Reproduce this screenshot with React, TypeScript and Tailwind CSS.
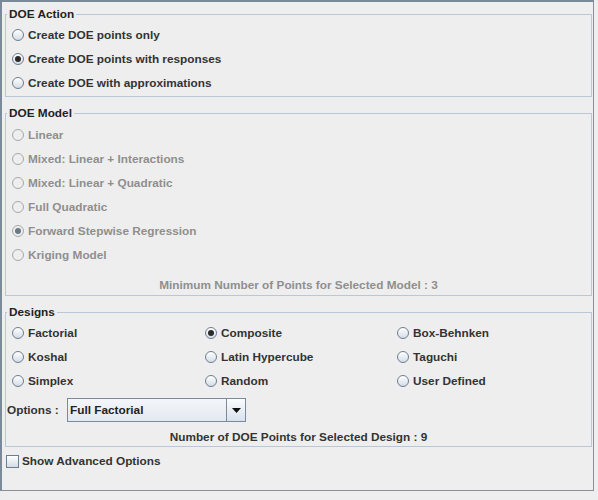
import React from "react";

const actions = [
  { label: "Create DOE points only", checked: false },
  { label: "Create DOE points with responses", checked: true },
  { label: "Create DOE with approximations", checked: false },
];

const models = [
  { label: "Linear", checked: false },
  { label: "Mixed: Linear + Interactions", checked: false },
  { label: "Mixed: Linear + Quadratic", checked: false },
  { label: "Full Quadratic", checked: false },
  { label: "Forward Stepwise Regression", checked: true },
  { label: "Kriging Model", checked: false },
];

const designs = [
  { label: "Factorial", checked: false },
  { label: "Composite", checked: true },
  { label: "Box-Behnken", checked: false },
  { label: "Koshal", checked: false },
  { label: "Latin Hypercube", checked: false },
  { label: "Taguchi", checked: false },
  { label: "Simplex", checked: false },
  { label: "Random", checked: false },
  { label: "User Defined", checked: false },
];

function Radio({ checked, disabled }: { checked?: boolean; disabled?: boolean }) {
  return (
    <span
      className={
        disabled
          ? "flex justify-center items-center border border-[#a8a8a8] rounded-full w-[12px] h-[12px] bg-[#eeeeee]"
          : "flex justify-center items-center border border-[#6f7e8d] rounded-full w-[12px] h-[12px] bg-linear-to-b from-white to-[#d3dce7]"
      }
    >
      {checked && (
        <span
          className={
            disabled
              ? "rounded-full w-[6px] h-[6px] bg-[#6b7886]"
              : "rounded-full w-[6px] h-[6px] bg-[#2a2a2a]"
          }
        />
      )}
    </span>
  );
}

function RadioRow({
  label,
  checked,
  disabled,
}: {
  label: string;
  checked?: boolean;
  disabled?: boolean;
}) {
  return (
    <div className="flex items-center h-[24px] pl-[6px]">
      <Radio checked={checked} disabled={disabled} />
      <span
        className={
          disabled ? "ml-[4px] text-[#8f8f8f]" : "ml-[4px] text-[#333333]"
        }
      >
        {label}
      </span>
    </div>
  );
}

function Legend({ title }: { title: string }) {
  return (
    <legend className="ml-[1px] px-[2px] leading-[14px] text-[#222222]">
      {title}
    </legend>
  );
}

export default function App() {
  return (
    <div className="bg-[#eeeeee] w-[598px] h-[500px] font-['Liberation_Sans',Arial,sans-serif] font-bold text-[11.8px] leading-[14px]">
      <div className="flex flex-col border-[#7a8a99] border-t-[2px] border-l-[2px] border-r border-r-[#8c9096] border-b border-b-[#8c9096] pt-[5px] pr-[1px] pl-[3px] w-[594px] h-[491px]">
        <fieldset className="border border-[#b9c8d7] pt-[2px] pb-[1px]">
          <Legend title="DOE Action" />
          {actions.map((a) => (
            <RadioRow key={a.label} label={a.label} checked={a.checked} />
          ))}
        </fieldset>

        <fieldset className="border border-[#b9c8d7] mt-[9px] pt-[3px] pb-[2px]">
          <Legend title="DOE Model" />
          {models.map((m) => (
            <RadioRow key={m.label} label={m.label} checked={m.checked} disabled />
          ))}
          <div className="mt-[10px] h-[16px] text-[#8f8f8f] text-center leading-[16px]">
            Minimum Number of Points for Selected Model : 3
          </div>
        </fieldset>

        <fieldset className="border border-[#b9c8d7] mt-[9px] pt-[2px] pb-[1px]">
          <Legend title="Designs" />
          <div className="grid grid-cols-[193px_192px_1fr]">
            {designs.map((d) => (
              <RadioRow key={d.label} label={d.label} checked={d.checked} />
            ))}
          </div>
          <div className="flex items-center mt-[5px] h-[24px]">
            <span className="ml-[1px] w-[60px] text-[#333333]">Options :</span>
            <div className="flex border border-[#7a8a99] w-[179px] h-[24px]">
              <div className="flex flex-1 items-center bg-linear-to-b from-[#f3f6fa] to-[#e4e9f0] pl-[2px] text-[#222222]">
                Full Factorial
              </div>
              <div className="flex justify-center items-center border-[#7a8a99] border-l bg-linear-to-b from-[#fbfdff] to-[#d9e2ec] w-[19px]">
                <svg width="9" height="5" viewBox="0 0 9 5">
                  <path d="M0 0 H9 L4.5 5 Z" fill="#111" />
                </svg>
              </div>
            </div>
          </div>
          <div className="mt-[7px] h-[16px] text-[#333333] text-center leading-[16px]">
            Number of DOE Points for Selected Design : 9
          </div>
        </fieldset>

        <div className="flex items-center mt-[2px] h-[24px]">
          <span className="border border-[#6f7e8d] ml-[1px] w-[13px] h-[13px] bg-linear-to-b from-white to-[#d3dce7]" />
          <span className="ml-[3px] text-[#333333]">Show Advanced Options</span>
        </div>
      </div>
    </div>
  );
}
